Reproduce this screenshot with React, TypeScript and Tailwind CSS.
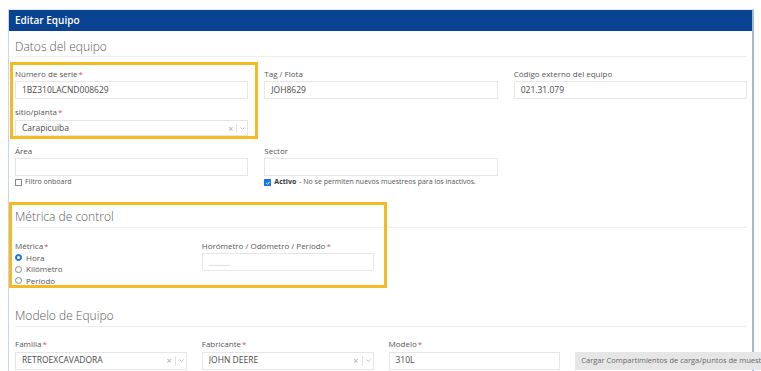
import React from "react";

const Req = () => <span className="text-[#d9534f] ml-[1px]">*</span>;

const Label = ({ text, req }: { text: string; req?: boolean }) => (
  <div className="h-[10px] leading-[10px] text-[8px] text-[#555] whitespace-nowrap">
    {text}
    {req && <Req />}
  </div>
);

const TextInput = ({ value, h = "h-[18px]" }: { value?: string; h?: string }) => (
  <div className={`${h} border border-[#e6e6e6] bg-white flex items-center pl-[6px] text-[8.5px] text-[#4a4a4a]`}>
    {value}
  </div>
);

const Chevron = () => (
  <svg viewBox="0 0 10 10" className="w-[7px] h-[7px]">
    <path d="M2 3.5 L5 6.5 L8 3.5" fill="none" stroke="#aaa" strokeWidth="1" />
  </svg>
);

const SelectBox = ({ value, h = "h-[18px]" }: { value: string; h?: string }) => (
  <div className={`${h} border border-[#e6e6e6] bg-white flex items-center pl-[6px] text-[8.5px] text-[#4a4a4a]`}>
    <span className="flex-1 truncate">{value}</span>
    <span className="text-[9px] text-[#aaa] px-[3px] leading-none">×</span>
    <span className="w-px h-[10px] bg-[#e2e2e2]" />
    <span className="pl-[2px] pr-[1px] flex items-center">
      <Chevron />
    </span>
  </div>
);

const Radio = ({ checked, label }: { checked?: boolean; label: string }) => (
  <div className="h-[11.5px] flex items-center gap-[4px] text-[8px] text-[#555]">
    <span
      className={`w-[7px] h-[7px] rounded-full border flex items-center justify-center ${
        checked ? "border-[#1a73e8] bg-[#1a73e8]" : "border-[#888] bg-white"
      }`}
    >
      {checked && <span className="w-[3px] h-[3px] rounded-full bg-white" />}
    </span>
    {label}
  </div>
);

const SectionTitle = ({ text, className }: { text: string; className: string }) => (
  <div className={`${className} leading-[17px] pb-[2px] text-[12px] font-light text-[#5a5a5a] border-b border-[#eeeeee]`}>
    {text}
  </div>
);

export default function App() {
  return (
    <div className="relative min-h-[371px] bg-white font-['Open_Sans',sans-serif] overflow-hidden">
      <div className="ml-[8px] mt-[9px] w-[746px] border-l border-[#c9d6ea] border-r-2 border-r-[#a7b8d6] border-t border-t-[#e3e9f3] bg-white">
        {/* Header */}
        <div className="h-[21px] bg-[#0b4393] pl-[6px] flex items-center text-white text-[10px] font-semibold">
          Editar Equipo
        </div>

        <div className="pl-[6px] pr-[5px] pb-[4px]">
          {/* Datos del equipo */}
          <SectionTitle text="Datos del equipo" className="pt-[7px] !pb-[1px]" />

          <div className="mt-[12px] grid grid-cols-3 gap-x-[16px]">
            <div>
              <Label text="Número de serie" req />
              <div className="mt-[2px]">
                <TextInput value="1BZ310LACND008629" />
              </div>
              <div className="mt-[8px]">
                <Label text="sitio/planta" req />
              </div>
              <div className="mt-[3px]">
                <SelectBox value="Carapicuiba" h="h-[16px]" />
              </div>
            </div>
            <div>
              <Label text="Tag / Flota" />
              <div className="mt-[2px]">
                <TextInput value="JOH8629" />
              </div>
            </div>
            <div>
              <Label text="Código externo del equipo" />
              <div className="mt-[2px]">
                <TextInput value="021.31.079" />
              </div>
            </div>
          </div>

          <div className="mt-[10px] grid grid-cols-3 gap-x-[16px]">
            <div>
              <Label text="Área" />
              <div className="mt-[2px]">
                <TextInput />
              </div>
              <div className="mt-[1px] h-[11px] flex items-center gap-[3px] text-[7px] text-[#555]">
                <span className="w-[7px] h-[7px] border border-[#888] bg-white" />
                Filtro onboard
              </div>
            </div>
            <div>
              <Label text="Sector" />
              <div className="mt-[2px]">
                <TextInput />
              </div>
              <div className="mt-[1px] h-[11px] flex items-center gap-[3px] text-[7px] text-[#555] whitespace-nowrap">
                <span className="w-[7px] h-[7px] bg-[#1a73e8] flex items-center justify-center">
                  <svg viewBox="0 0 10 10" className="w-[6px] h-[6px]">
                    <path d="M2 5 L4.2 7.2 L8 2.8" fill="none" stroke="white" strokeWidth="1.6" />
                  </svg>
                </span>
                <span className="font-bold text-[#333]">Activo</span>
                <span>- No se permiten nuevos muestreos para los inactivos.</span>
              </div>
            </div>
            <div />
          </div>

          {/* Métrica de control */}
          <SectionTitle text="Métrica de control" className="mt-[20px]" />

          <div className="mt-[13px] grid grid-cols-4 gap-x-[15px]">
            <div>
              <Label text="Métrica" req />
              <div className="mt-[1px]">
                <Radio checked label="Hora" />
                <Radio label="Kilómetro" />
                <Radio label="Período" />
              </div>
            </div>
            <div>
              <Label text="Horómetro / Odómetro / Período" req />
              <div className="mt-[2px] h-[18px] border border-[#e6e6e6] pl-[6px] flex items-center text-[8px] text-[#bbb]">
                ______
              </div>
            </div>
          </div>

          {/* Modelo de Equipo */}
          <SectionTitle text="Modelo de Equipo" className="mt-[20px]" />

          <div className="mt-[12px] grid grid-cols-4 gap-x-[15px]">
            <div>
              <Label text="Familia" req />
              <div className="mt-[3px]">
                <SelectBox value="RETROEXCAVADORA" />
              </div>
            </div>
            <div>
              <Label text="Fabricante" req />
              <div className="mt-[3px]">
                <SelectBox value="JOHN DEERE" />
              </div>
            </div>
            <div>
              <Label text="Modelo" req />
              <div className="mt-[3px]">
                <TextInput value="310L" />
              </div>
            </div>
            <div className="pt-[13px]">
              <div className="w-[186px] h-[18px] bg-[#e6e6e6] pl-[6px] flex items-center text-[7.5px] text-[#666] whitespace-nowrap overflow-hidden">
                Cargar Compartimientos de carga/puntos de muestreo
              </div>
            </div>
          </div>
        </div>
      </div>

      {/* Highlight boxes */}
      <div className="absolute left-[10px] top-[62px] w-[248px] h-[77px] border-[3px] border-[#f5b921] pointer-events-none" />
      <div className="absolute left-[9px] top-[202px] w-[378px] h-[86px] border-[3px] border-[#f5b921] pointer-events-none" />
    </div>
  );
}
